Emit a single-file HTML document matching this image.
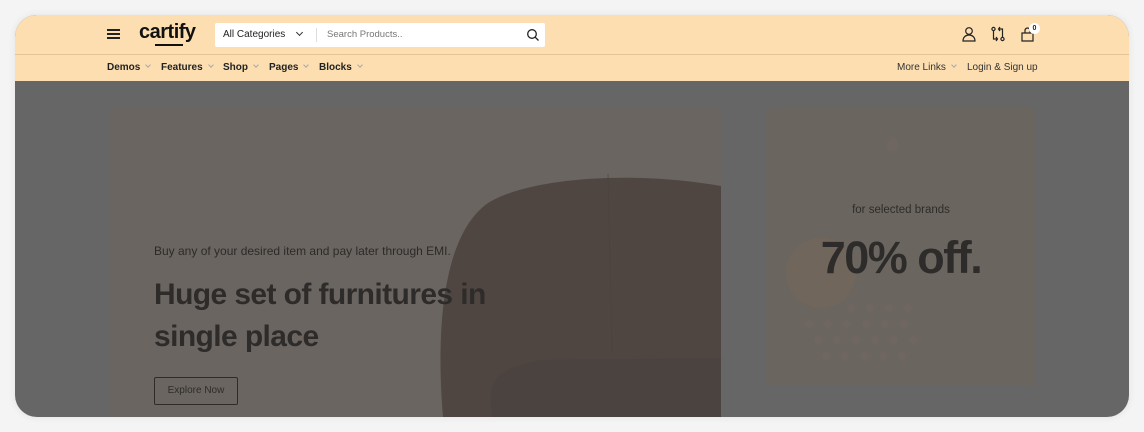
<!DOCTYPE html>
<html><head><meta charset="utf-8"><style>
*{margin:0;padding:0;box-sizing:border-box}
body{width:1144px;height:432px;background:#f4f4f4;font-family:"Liberation Sans",sans-serif;position:relative;overflow:hidden}
.frame{position:absolute;left:15px;top:15px;width:1114px;height:402px;border-radius:22px;overflow:hidden;background:#666;box-shadow:0 0 8px rgba(0,0,0,.08)}
.hdr{position:absolute;left:0;top:0;width:1114px;height:66px;background:#fddeb1}
.line{position:absolute;left:0;top:39px;width:1114px;height:1px;background:#e2c497}
.a{position:absolute;font-size:10px;color:#222}
.nav{position:absolute;top:47px;font-size:10px;font-weight:bold;color:#222}
.chev{display:inline-block;width:4px;height:4px;border-right:1px solid #aaa;border-bottom:1px solid #aaa;transform:rotate(45deg);margin-left:6px;position:relative;top:-3px}
.search{position:absolute;left:200px;top:8px;width:330px;height:24px;background:#fff;border-radius:2px}
.card{position:absolute;border-radius:6px;overflow:hidden}
</style></head><body>
<div class="frame">
 <div class="hdr">
  <div style="position:absolute;left:92px;top:14px;width:13px;height:1.5px;background:#222;box-shadow:0 4px 0 #222,0 8px 0 #222"></div>
  <div style="position:absolute;left:124px;top:6px;font-size:20px;font-weight:bold;color:#111;letter-spacing:-.5px">cartify</div>
  <div style="position:absolute;left:140px;top:29px;width:28px;height:2px;background:#111"></div>
  <div class="search">
   <div class="a" style="left:8px;top:6px;font-size:10px">All Categories</div>
   <div style="position:absolute;left:82px;top:7px;width:5px;height:5px;border-right:1.3px solid #333;border-bottom:1.3px solid #333;transform:rotate(45deg)"></div>
   <div style="position:absolute;left:101px;top:5px;width:1px;height:14px;background:#ddd"></div>
   <div class="a" style="left:112px;top:6px;color:#777;font-size:9.5px">Search Products..</div>
   <svg style="position:absolute;left:311px;top:5px" width="14" height="14" viewBox="0 0 14 14"><circle cx="6" cy="6" r="4.3" fill="none" stroke="#222" stroke-width="1.3"/><path d="M9.2 9.2L12.5 12.5" stroke="#222" stroke-width="1.3"/></svg>
  </div>
  <svg style="position:absolute;left:946px;top:11px" width="16" height="16" viewBox="0 0 16 16" fill="none" stroke="#222" stroke-width="1.2"><circle cx="8" cy="5" r="3.3"/><path d="M2 15c0-4 3-6 6-6s6 2 6 6z"/></svg>
  <svg style="position:absolute;left:975px;top:11px" width="16" height="16" viewBox="0 0 16 16" fill="none" stroke="#222" stroke-width="1.2"><circle cx="3.5" cy="3" r="1.6"/><circle cx="12.5" cy="13" r="1.6"/><path d="M3.5 4.6V13h4M6 11l1.5 2L6 15M12.5 11.4V3h-4M10 1l-1.5 2L10 5"/></svg>
  <svg style="position:absolute;left:1005px;top:11px" width="16" height="16" viewBox="0 0 16 16" fill="none" stroke="#222" stroke-width="1.2"><path d="M2 7h11v8H2zM5 7V4.5a2.5 2.5 0 0 1 5 0V7"/></svg>
  <div style="position:absolute;left:1014px;top:8px;width:11px;height:11px;border-radius:50%;background:#fff;font-size:7px;font-weight:bold;text-align:center;line-height:11px;color:#222">0</div>
  <div class="line"></div>
  <div class="nav" style="left:92px;top:47px">Demos<span class="chev"></span></div>
  <div class="nav" style="left:146px;top:47px">Features<span class="chev"></span></div>
  <div class="nav" style="left:208px;top:47px">Shop<span class="chev"></span></div>
  <div class="nav" style="left:254px;top:47px">Pages<span class="chev"></span></div>
  <div class="nav" style="left:304px;top:47px">Blocks<span class="chev"></span></div>
  <div class="nav" style="left:882px;font-weight:normal;color:#333">More Links<span class="chev"></span></div>
  <div class="nav" style="left:952px;font-weight:normal;color:#333">Login &amp; Sign up</div>
 </div>
 <div class="card" style="left:95px;top:93px;width:611px;height:320px;background:#6a6561;border-radius:6px 6px 0 0">
  <svg style="position:absolute;left:0;top:0" width="611" height="320"><path d="M334 320 C326 240 328 130 378 95 C418 70 520 62 611 78 L611 320 Z" fill="#4f4642"/><path d="M384 320 C376 275 380 262 430 252 L611 250 L611 320Z" fill="#4b433f"/><path d="M498 66 L502 245" stroke="#4a423e" stroke-width="1" opacity=".6"/></svg>
  <div class="a" style="left:44px;top:136px;font-size:12px;color:#2c2a28">Buy any of your desired item and pay later through EMI.</div>
  <div class="a" style="left:44px;top:166px;font-size:30px;line-height:42px;font-weight:bold;color:#2e2c2a;letter-spacing:-.6px">Huge set of furnitures in<br>single place</div>
  <div style="position:absolute;left:44px;top:269px;width:84px;height:28px;border:1.5px solid #2e2c2a;border-radius:2px;font-size:10px;color:#2e2c2a;text-align:center;line-height:25px">Explore Now</div>
 </div>
 <div class="card" style="left:751px;top:93px;width:270px;height:278px;background:#6a655f">
  <div style="position:absolute;left:20px;top:130px;width:70px;height:70px;border-radius:50%;background:#71665c"></div>
  <svg style="position:absolute;left:0;top:0" width="270" height="278"><g fill="#6f675f"><circle cx="43" cy="216" r="4"/><circle cx="62" cy="216" r="4"/><circle cx="81" cy="216" r="4"/><circle cx="100" cy="216" r="4"/><circle cx="119" cy="216" r="4"/><circle cx="138" cy="216" r="4"/><circle cx="52" cy="232" r="4"/><circle cx="71" cy="232" r="4"/><circle cx="90" cy="232" r="4"/><circle cx="109" cy="232" r="4"/><circle cx="128" cy="232" r="4"/><circle cx="147" cy="232" r="4"/><circle cx="60" cy="248" r="4"/><circle cx="79" cy="248" r="4"/><circle cx="98" cy="248" r="4"/><circle cx="117" cy="248" r="4"/><circle cx="136" cy="248" r="4"/><circle cx="85" cy="200" r="4"/><circle cx="104" cy="200" r="4"/><circle cx="123" cy="200" r="4"/><circle cx="142" cy="200" r="4"/><circle cx="127" cy="37" r="6"/></g></svg>
  <div style="position:absolute;left:0;width:270px;top:96px;text-align:center;font-size:11.5px;color:#2e2c2a">for selected brands</div>
  <div style="position:absolute;left:0;width:270px;top:124px;text-align:center;font-size:45px;font-weight:bold;color:#2e2c2a;letter-spacing:-1.5px">70% off.</div>
 </div>
</div>
</body></html>
